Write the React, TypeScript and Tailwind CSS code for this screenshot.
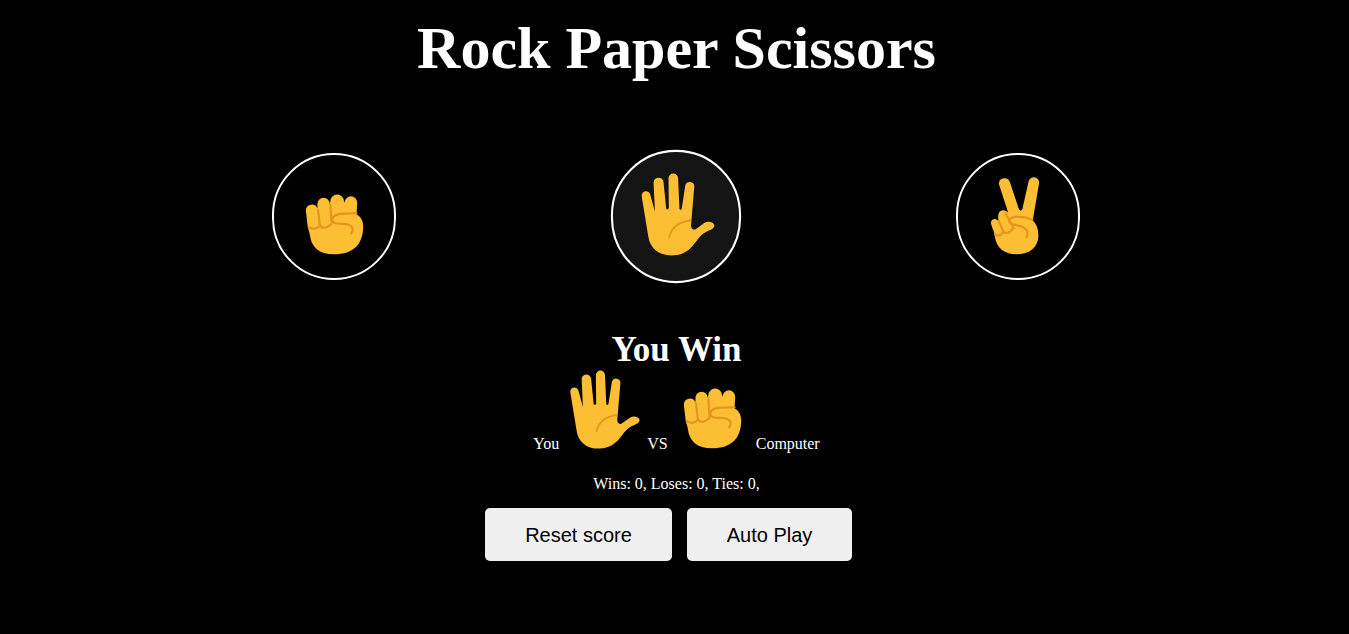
const SKIN = '#fcbf34';
const CREASE = '#e5951f';

const Fist = ({ className }: { className?: string }) => (
  <svg viewBox="133 160 177 184" className={className}>
    <path
      fill={SKIN}
      d="M135 210A18 18 0 0 1 170 204L170 190A18.5 18.5 0 0 1 207 190L209 182A20.5 20.5 0 0 1 250 182L252 186A19 19 0 0 1 290 186L288 222C300 228 308 240 308 258C308 310 280 342 220 342C175 342 151 320 147 282C146 275 143 268 141 262Z"
    />
    <path
      fill="none"
      stroke={CREASE}
      strokeWidth="6.5"
      strokeLinecap="round"
      strokeLinejoin="round"
      d="M144 260C155 268 172 266 177 254L172 208M178 254C184 266 200 264 213 250L209 192M288 218L236 220C220 223 212 232 216 242C222 254 245 248 262 252C278 257 280 268 272 279"
    />
  </svg>
);

const Hand = ({ className }: { className?: string }) => (
  <svg viewBox="124 98 222 250" className={className}>
    <path
      fill={SKIN}
      d="M125 168A13 13 0 0 1 151 164L165 215L161 128A15 15 0 0 1 191 126L199 205C199 209 206 209 207 204L206 114A14.5 14.5 0 0 1 235 114L239 205C240 210 245 210 246 205L257 134A14 14 0 0 1 284 138L274 255C274 268 282 272 290 266L315 248C325 243 340 245 344 254C347 262 338 268 328 272C315 277 305 285 295 297C278 320 260 347 215 347C175 347 150 325 145 290Z"
    />
    <path
      fill="none"
      stroke={CREASE}
      strokeWidth="5.5"
      strokeLinecap="round"
      d="M208 292C215 265 235 245 272 241"
    />
  </svg>
);

const Victory = ({ className }: { className?: string }) => (
  <svg viewBox="136 106 149 238" className={className}>
    <path
      fill={SKIN}
      d="M138 248C138 238 146 234 153 236C156 237 159 239 161 242C158 225 160 209 175 209C182 209 187 212 190 217L162 130A17 17 0 0 1 195 124L222 205C225 212 231 212 233 205L251 124A16 16 0 0 1 283 128L264 240C275 250 281 265 281 285C281 320 255 342 215 342C180 342 155 325 150 290C149 280 147 272 143 265Z"
    />
    <path
      fill="none"
      stroke={CREASE}
      strokeWidth="6.5"
      strokeLinecap="round"
      strokeLinejoin="round"
      d="M162 243L176 275C165 288 155 286 150 282M176 275C186 282 198 274 206 262L182 218M262 238C235 226 198 224 193 240C189 256 222 250 238 262C250 272 250 282 245 290"
    />
  </svg>
);

const App = () => {
  return (
    <div className="min-h-screen bg-black text-white text-center pl-[4px] font-['Liberation_Serif',serif]">
      <h1 className="text-[60px] leading-[69px] font-bold pt-[14px]">Rock Paper Scissors</h1>

      <div className="w-[1026px] ml-[159px] mt-[70px] flex justify-around items-center h-[127px]">
        <button className="w-[124px] h-[127px] rounded-full border-2 border-white bg-black flex items-center justify-center">
          <Fist className="w-[59px] h-[61px] mt-[15px]" />
        </button>
        <button className="w-[124px] h-[127px] rounded-full border-2 border-white bg-[#141414] flex items-center justify-center scale-105">
          <Hand className="w-[70px] h-[79px] ml-[4px] mb-[5px]" />
        </button>
        <button className="w-[124px] h-[127px] rounded-full border-2 border-white bg-black flex items-center justify-center">
          <Victory className="w-[50px] h-[79px] mr-[6px] mb-[3px]" />
        </button>
      </div>

      <h2 className="text-[35px] leading-[41px] font-bold mt-[49px]">You Win</h2>

      <div className="flex justify-center items-baseline text-[16px] h-[81px]">
        <span>You</span>
        <Hand className="w-[70px] h-[79px] ml-[11px] mr-[7px] mb-[2px]" />
        <span>VS</span>
        <Fist className="w-[59px] h-[61px] ml-[15px] mr-[14px] mb-[2px]" />
        <span>Computer</span>
      </div>

      <p className="text-[16px] mt-[21px]">Wins: 0, Loses: 0, Ties: 0,</p>

      <div className="flex justify-center gap-[15px] mt-[12px] pr-[16px] font-['Liberation_Sans',sans-serif] text-[20px] text-black">
        <button className="w-[187px] h-[53px] rounded-[5px] bg-[#f0f0f0]">Reset score</button>
        <button className="w-[165px] h-[53px] rounded-[5px] bg-[#f0f0f0]">Auto Play</button>
      </div>
    </div>
  );
};

export default App;
